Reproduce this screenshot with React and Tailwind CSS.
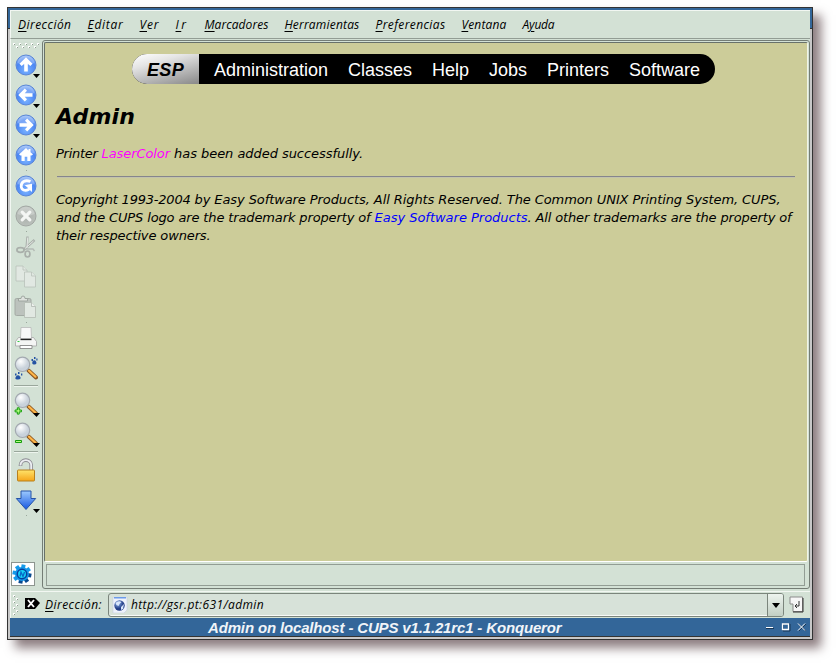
import React, { useLayoutEffect, useRef } from 'react';

// A label whose tracking is adjusted so that it fills the given width.
function Fit({ w, className = '', children }) {
  const ref = useRef(null);
  useLayoutEffect(() => {
    const el = ref.current;
    el.style.letterSpacing = '0px';
    const n = el.textContent.length;
    el.style.letterSpacing = (w - el.getBoundingClientRect().width) / n + 'px';
  }, [w]);
  return <span ref={ref} className={`inline-block shrink-0 whitespace-pre ${className}`}>{children}</span>;
}

const menus = [
  ['', 'D', 'irección', 53.5], ['', 'E', 'ditar', 36], ['', 'V', 'er', 20], ['', 'I', 'r', 13],
  ['', 'M', 'arcadores', 64], ['', 'H', 'erramientas', 75], ['', 'P', 'referencias', 70],
  ['', 'V', 'entana', 45], ['A', 'y', 'uda', 32],
];

const links = [['Administration', 114], ['Classes', 64], ['Help', 37], ['Jobs', 38], ['Printers', 62], ['Software', 71]];

function Svg({ children }) {
  return <svg width="24" height="24" viewBox="0 0 24 24" className="mr-[2px] block shrink-0">{children}</svg>;
}

function Ball({ children, gray }) {
  return (
    <Svg>
      <circle cx="12" cy="12" r="10" fill={gray ? 'url(#grayBall)' : 'url(#blueBall)'} stroke={gray ? '#a3a8a4' : '#5a86d6'} strokeWidth="1" />
      <path d="M3.500 10a8.600 8.600 0 0 1 17 0q-8.500 4-17 0z" fill="#fff" opacity=".25" />
      {children}
    </Svg>
  );
}

const arrow = 'M12 4.300 18.500 10.800 16.300 13 13.800 10.700V18.500H10.200V10.700L7.700 13 5.500 10.800z';
const page = 'M0 0h7l4 4v11H0z';

const icons = {
  up: <Ball><path d={arrow} fill="#fff" /></Ball>,
  back: <Ball><path d={arrow} fill="#fff" transform="rotate(-90 12 12)" /></Ball>,
  forward: <Ball><path d={arrow} fill="#fff" transform="rotate(90 12 12)" /></Ball>,
  home: <Ball><path d="M12 5 5 11.500l1.500 1H7.500V18h3.200v-4.200h2.600V18h3.200v-5.500h1l1.500-1-2.500-2.300V6h-2v1.500z" fill="#fff" /></Ball>,
  reload: <Ball><path d="M16.500 7.500C11 5.500 7 8 7.200 12.500 7.500 16 11 17.500 14.500 15.500" fill="none" stroke="#fff" strokeWidth="2.800" /><path d="M10.800 11.200 18 9.800V18l-2-1.800-2 .8v-3z" fill="#fff" /></Ball>,
  stop: <Ball gray><path d="m8.200 8.200 7.600 7.600m0-7.600-7.600 7.600" stroke="#f4f6f4" strokeWidth="3.300" strokeLinecap="round" /></Ball>,
  cut: (
    <Svg>
      <path d="M13.500 1.500 12.500 14M20.500 5 10 14.500" stroke="#aab0ab" strokeWidth="2.400" />
      <path d="M13.700 2.500 13 13M19.500 6 11 13.500" stroke="#e4e8e4" strokeWidth="1" />
      <ellipse cx="6.500" cy="15" rx="3.600" ry="2.300" fill="none" stroke="#a9afaa" strokeWidth="1.700" />
      <ellipse cx="13.500" cy="19" rx="2.400" ry="3" fill="none" stroke="#a9afaa" strokeWidth="1.700" />
      <path d="M12 14h7l1.500 2" fill="none" stroke="#b5bbb6" strokeWidth="1.300" />
    </Svg>
  ),
  copy: (
    <Svg>
      <g fill="#e1e8e2" stroke="#b9c1ba" strokeWidth=".8">
        <path d={page} transform="translate(2 1)" /><path d="M9 1v4h4" />
        <path d={page} transform="translate(10.500 7)" /><path d="M17.500 7v4h4" />
      </g>
    </Svg>
  ),
  paste: (
    <Svg>
      <rect x="1" y="3.500" width="16" height="17" rx="1.500" fill="#bcc2bd" stroke="#a3aaa4" />
      <path d="M4.500 6V3.500H7Q7 1 9 1t2 2.500h2.500V6z" fill="#dde1dd" stroke="#9aa19b" strokeWidth=".9" />
      <path d={page} transform="translate(10.500 7.500)" fill="#e1e8e2" stroke="#b2bab3" strokeWidth=".8" />
      <path d="M17.500 7.500v4h4" fill="#edf1ed" stroke="#aeb5af" strokeWidth=".8" />
    </Svg>
  ),
  print: (
    <Svg>
      <path d="M7 1.500h10l.5 11h-11z" fill="#f8f8f8" stroke="#b3b3b3" strokeWidth=".7" />
      <path d="M4.500 11.500h2l.5 1.500h10l.5-1.500h2l3 4v4.500h-21v-4.500z" fill="#f4f5f4" stroke="#a5a5a5" strokeWidth=".8" />
      <path d="M6.500 13.500h11" stroke="#222" strokeWidth="1.300" />
      <path d="M6 19.500h12v3H6z" fill="#fff" stroke="#888" strokeWidth=".9" />
      <path d="M3.500 15.500h2" stroke="#3c4" />
    </Svg>
  ),
  find: (
    <Svg>
      <Lens />
      <g fill="#2352a4">
        <path d="M18.500 5.500q2-2.500 3.500 0t-1.500 3-2-3zM17.500 3H19v2h-1.500zM20 1h1.500v2H20zM22.300 2.500h1.200v2h-1.200zM2 20.500q2-2.500 4 0t-2 3-2-3zM1 17.500h1.500v2H1zM4 16h1.500v2H4zM7 17.500h1.300v2H7z" />
      </g>
    </Svg>
  ),
  zoomIn: <Svg><Lens /><path d="M3.300 15.800h1.900v2.200h2.200v1.900H5.200v2.200H3.300v-2.200H1.100V18h2.200z" fill="#b4ff80" stroke="#159d0c" strokeWidth="1" /></Svg>,
  zoomOut: <Svg><Lens /><path d="M1.500 18.500h6v2h-6z" fill="#b4ff80" stroke="#159d0c" strokeWidth="1" /></Svg>,
  lock: (
    <Svg>
      <path d="M6.500 8V7a5.300 4.800 0 0 1 10.700 0v6" fill="none" stroke="#8b8b92" strokeWidth="3.600" />
      <path d="M6.500 7.600V7a5.300 4.800 0 0 1 10.700 0v6" fill="none" stroke="#eceef2" strokeWidth="1.900" />
      <rect x="3.500" y="12" width="17" height="11" rx=".7" fill="url(#gold)" stroke="#b8801c" strokeWidth="1" />
    </Svg>
  ),
  down: <Svg><path d="M7 3h10v7.500h4.700L12 21.500 2.300 10.500H7z" fill="url(#blueArrow)" stroke="#2654a7" strokeWidth="1" strokeLinejoin="round" /></Svg>,
};

function Lens() {
  return (
    <>
      <path d="m14.500 14.500 7.500 7" stroke="#8a5520" strokeWidth="4" strokeLinecap="round" />
      <path d="m15 14.700 6.500 6" stroke="#ffb648" strokeWidth="2.200" strokeLinecap="round" />
      <circle cx="8.500" cy="8.300" r="7.200" fill="url(#glass)" stroke="#a3a9b0" strokeWidth="1.200" />
    </>
  );
}

function Cell({ icon, menu }) {
  return (
    <div className="relative flex h-[30px] w-full shrink-0 items-center justify-center">
      {icons[icon]}
      {menu && <svg width="7" height="4" viewBox="0 0 7 4" className="absolute right-[2px] top-[24px]"><path d="M0 0h7L3.500 4z" fill="#000" /></svg>}
    </div>
  );
}

function Dot() {
  return <div className="flex h-px w-full shrink-0 justify-center"><div className="h-px w-px bg-[#9aa89c]" /></div>;
}

function Separator() {
  return <div className="flex h-[6px] w-full shrink-0 items-center justify-center"><div className="mr-[2px] h-[2px] w-[24px] border-b border-[#edf5ee] bg-[#9aa79c]" /></div>;
}

function Toolbar() {
  return (
    <div className="flex w-[32px] shrink-0 flex-col items-center border-l border-[#f2f7f2]">
      <svg width="28" height="7" className="mb-px mr-[2px] mt-[3px] shrink-0">
        {[0, 1, 2, 3, 4, 5, 6, 7, 8].map((i) => (
          <g key={i}>
            <rect x={1 + i * 3} y={i % 2 ? 4 : 1} width="2" height="2" fill="#fff" />
            <rect x={2 + i * 3} y={i % 2 ? 5 : 2} width="1" height="1" fill="#8e9b90" />
          </g>
        ))}
      </svg>
      <Cell icon="up" menu /><Cell icon="back" menu /><Cell icon="forward" menu /><Cell icon="home" />
      <Dot />
      <Cell icon="reload" /><Cell icon="stop" />
      <Dot />
      <Cell icon="cut" /><Cell icon="copy" /><Cell icon="paste" />
      <Dot />
      <Cell icon="print" /><Cell icon="find" />
      <Separator />
      <Cell icon="zoomIn" menu /><Cell icon="zoomOut" menu />
      <Separator />
      <Cell icon="lock" /><Cell icon="down" menu />
      <Dot />
      <div className="mb-[5px] mr-[7px] mt-auto flex h-[24px] w-[24px] shrink-0 items-center justify-center border border-[#8d958f] bg-white">
        <svg width="22" height="22" viewBox="0 0 22 22">
          <g transform="translate(10 11)">
            {[0, 45, 90, 135, 180, 225, 270, 315].map((a) => (
              <rect key={a} x="-2" y="-9.500" width="4" height="5" fill={a > 45 && a < 200 ? '#08498f' : '#159bea'} transform={`rotate(${a + 10})`} />
            ))}
            <circle r="7" fill="#1597e8" />
            <circle r="4.700" fill="#18d4f5" stroke="#073f9e" strokeWidth="1.500" />
            <path d="M-2 2.500-1-2 1 2.500 2.500-2" fill="none" stroke="#0869c8" strokeWidth="1.300" />
          </g>
        </svg>
      </div>
    </div>
  );
}

function CupsPage() {
  return (
    <div className="flex min-h-0 grow flex-col rounded-[2px] border border-b-white border-l-[#687169] border-r-[#f0f4e8] border-t-[#687169] bg-[#cccc99] pl-[11px] pr-[11px] pt-[11px] font-['DejaVu_Sans',sans-serif] text-[13px] italic leading-[18px] text-black">
      <nav className="ml-[76px] flex h-[30px] w-[583px] shrink-0 overflow-hidden rounded-full bg-black font-['Liberation_Sans',Arial,sans-serif] text-[18px] not-italic leading-[32px]">
        <div className="w-[67px] shrink-0 bg-linear-[165deg,#ffffff_0%,#e5e5e5_30%,#888888_100%] pl-[15px] font-bold italic text-black"><Fit w={37}>ESP</Fit></div>
        <div className="flex gap-[20px] pl-[15px] text-white">
          {links.map(([t, w]) => <Fit key={t} w={w}>{t}</Fit>)}
        </div>
      </nav>
      <h1 className="mt-[19px] text-[22px] font-bold leading-[28px]"><Fit w={79}>Admin</Fit></h1>
      <p className="mt-[14px] flex"><Fit w={45.5}>{'Printer '}</Fit><Fit w={68.5} className="text-[#f0f]">LaserColor</Fit><Fit w={193}>{' has been added successfully.'}</Fit></p>
      <div className="ml-px mr-px mt-[13px] h-[2px] shrink-0 border-b border-[#c3c3ac] bg-[#85858d]" />
      <div className="mt-[13px] flex flex-col items-start">
        <div className="flex"><Fit w={138.5}>{'Copyright 1993-2004 '}</Fit><Fit w={586}>by Easy Software Products, All Rights Reserved. The Common UNIX Printing System, CUPS,</Fit></div>
        <div className="flex"><Fit w={318.5}>{'and the CUPS logo are the trademark property of '}</Fit><Fit w={153} className="text-[#00f]">Easy Software Products</Fit><Fit w={264}>. All other trademarks are the property of</Fit></div>
        <Fit w={154.5}>their respective owners.</Fit>
      </div>
    </div>
  );
}

function AddressBar() {
  return (
    <div className="flex h-[27px] shrink-0 items-center border-l border-t border-[#f2f7f2] font-['Open_Sans',sans-serif] text-[12px] italic text-black">
      <svg width="7" height="21" className="ml-px shrink-0">
        {[0, 1, 2, 3, 4, 5, 6].map((i) => (
          <g key={i}><rect x={i % 2 ? 4 : 1} y={i * 3} width="2" height="2" fill="#fff" /><rect x={i % 2 ? 5 : 2} y={1 + i * 3} width="1" height="1" fill="#8e9b90" /></g>
        ))}
      </svg>
      <svg width="16" height="13" viewBox="0 0 16 13" className="mb-[3px] ml-[6px] shrink-0">
        <path d="M0 1h10l5 5-5 6H0z" fill="#000" /><path d="m3 3 6 7m0-7-6 7" stroke="#fff" strokeWidth="1.900" />
      </svg>
      <Fit w={57} className="ml-[4px]"><u className="underline underline-offset-2">D</u>irección:</Fit>
      <div className="ml-[6px] flex h-[24px] w-[676px] shrink-0 items-center rounded-[3px] border border-[#7b857c] bg-[#d7e2d9] shadow-[inset_0_-1px_0_#f8faf8]">
        <svg width="16" height="16" viewBox="0 0 16 16" className="ml-[3px] shrink-0">
          <path d="M1 0h14v13l-3 3H1z" fill="#eef2fb" stroke="#c5cde0" strokeWidth=".6" /><path d="M2 0h12v1.500H2z" fill="#6c9be8" />
          <circle cx="7.500" cy="8.500" r="5.200" fill="url(#globe)" /><path d="M3.500 6q3-3 6-1l-2 2-1 2-2-1zM9 10l3-3-1 5-2 1z" fill="#d9e6fb" />
        </svg>
        <Fit w={133} className="ml-[3px]">http://gsr.pt:631/admin</Fit>
        <div className="ml-auto flex h-full w-[16px] items-center justify-center rounded-r-[2px] border-l border-[#7b857c] bg-linear-to-b from-[#edf4ee] to-[#c2cfc4]">
          <svg width="8" height="5" viewBox="0 0 8 5"><path d="M0 0h8L4 5z" fill="#000" /></svg>
        </div>
      </div>
      <svg width="16" height="17" viewBox="0 0 16 17" className="mb-[2px] ml-[5px] shrink-0">
        <path d="M1 1h12.500v14.500H4V8H1z" fill="#f6f6f6" stroke="#8b8b8b" /><path d="M14 2v14H4" fill="none" stroke="#333" />
        <path d="M10 5v5H6m2-2-2 2 2 2" fill="none" stroke="#333" />
      </svg>
    </div>
  );
}

export default function App() {
  return (
    <div className="h-[663px] w-[836px] overflow-hidden bg-white pl-[7px] pt-[7px]">
      <svg width="0" height="0" className="absolute">
        <defs>
          <radialGradient id="blueBall" cx=".5" cy=".75" r=".75"><stop stopColor="#7ab2ff" /><stop offset=".65" stopColor="#4a86f4" /><stop offset="1" stopColor="#9cbff6" /></radialGradient>
          <radialGradient id="grayBall"><stop stopColor="#aaafab" /><stop offset="1" stopColor="#bac0bb" /></radialGradient>
          <radialGradient id="glass" cx=".38" cy=".3"><stop stopColor="#fff" /><stop offset="1" stopColor="#c9d2db" /></radialGradient>
          <radialGradient id="globe" cx=".35" cy=".3"><stop stopColor="#93b5ec" /><stop offset="1" stopColor="#243f88" /></radialGradient>
          <linearGradient id="gold" x2="0" y2="1"><stop stopColor="#ffe46b" /><stop offset="1" stopColor="#f5a51a" /></linearGradient>
          <linearGradient id="blueArrow" x2="0" y2="1"><stop stopColor="#9ccaff" /><stop offset="1" stopColor="#1656df" /></linearGradient>
        </defs>
      </svg>
      <div className="flex h-[633px] w-[806px] flex-col border border-[#333] bg-[linear-gradient(#336699_0px,#336699_20px,#333_20px,#333_21px,#c8c8c8_21px)] px-[2px] pb-[2px] pt-[2px] shadow-[8px_8px_10px_rgba(65,40,45,0.6)]">
        <div className="flex min-h-0 grow flex-col bg-[#d3e1d5]">
          <div className="flex h-[29px] shrink-0 gap-[16px] border-b border-l border-t border-b-[#929d94] border-l-[#f2f7f2] border-t-[#f2f7f2] pl-[7px] font-['Open_Sans',sans-serif] text-[12px] italic leading-[27px] text-black">
            {menus.map(([a, u, b, w]) => <Fit key={u + b} w={w}>{a}<u className="underline underline-offset-2">{u}</u>{b}</Fit>)}
          </div>
          <div className="flex min-h-0 grow">
            <Toolbar />
            <div className="mb-[2px] mt-px flex grow flex-col rounded-[3px] border border-[#747d75] p-px">
              <CupsPage />
              <div className="ml-[2px] mr-[3px] mb-px mt-[2px] h-[22px] shrink-0 border border-[#929d94]" />
            </div>
          </div>
          <AddressBar />
          <div className="flex h-[19px] shrink-0 items-center border-b border-[#333] bg-[#336699] pl-[198px] font-['Liberation_Sans',Arial,sans-serif] text-[15px] font-bold italic leading-[18px] text-[#f0f4f8]">
            <Fit w={353.5} className="pt-px">Admin on localhost - CUPS v1.1.21rc1 - Konqueror</Fit>
            <svg width="42" height="10" viewBox="0 0 42 10" className="ml-auto mr-[3px]">
              <path d="M1 6.500h8" stroke="#173554" /><path d="M1 5.500h7" stroke="#fff" />
              <path d="M18 2v7h7V2z" fill="none" stroke="#173554" /><path d="M17.500 2v5.500h6V2z" fill="none" stroke="#fff" strokeWidth="1.300" />
              <path d="m34 2 7 7m0-7-7 7" stroke="#173554" /><path d="m33 1.500 7 7m0-7-7 7" stroke="#fff" />
            </svg>
          </div>
        </div>
      </div>
    </div>
  );
}
